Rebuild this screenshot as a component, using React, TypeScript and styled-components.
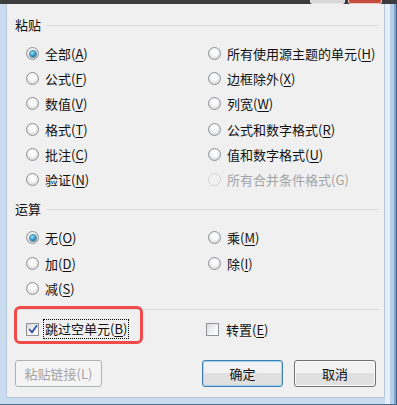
import React from "react";
import styled, { createGlobalStyle, css } from "styled-components";

const Global = createGlobalStyle`
  html, body { margin: 0; padding: 0; background: #3c3c3c; }
  body { font-family: "Noto Sans CJK SC", "Noto Sans", sans-serif; }
`;

const Window = styled.div`
  width: 397px;
  height: 405px;
  display: flex;
  flex-direction: column;
  background: #3c3c3c;
  overflow: hidden;
`;

const TitleStrip = styled.div`
  height: 4px;
  flex: none;
  display: flex;
  justify-content: flex-end;
  gap: 3px;
  padding-right: 15px;
`;

const CapButton = styled.div<{ $red?: boolean }>`
  width: ${(p) => (p.$red ? 32 : 33)}px;
  height: 3px;
  border: 1px solid ${(p) => (p.$red ? "#f1c6bf" : "#e8e8e8")};
  border-top: none;
  border-radius: 0 0 3px 3px;
  background: ${(p) => (p.$red ? "#c64b3c" : "#d8d8d8")};
`;

const Frame = styled.div`
  flex: 1;
  display: flex;
  padding: 0 0 0 6px;
  background: #c9dcef;
  border-bottom: 1px solid #4b6b8c;
`;

const RightEdge = styled.div`
  width: 12px;
  flex: none;
  background: linear-gradient(90deg, #e6eff8 0 5px, #b6d0ea 5px 9px, #7fa6cc 9px 11px, #3f5f80 11px);
`;

const PanelCol = styled.div`
  flex: 1;
  display: flex;
  flex-direction: column;
  padding-bottom: 6px;
`;

const Panel = styled.div`
  flex: 1;
  background: #f0f0f0;
  border-left: 1px solid #b4c6d8;
  border-right: 1px solid #b4c6d8;
  border-bottom: 1px solid #b4c6d8;
  padding: 12px 4px 0 8px;
  display: flex;
  flex-direction: column;
  color: #111;
  font-size: 13px;
`;

const GroupHeader = styled.div<{ $mt: number }>`
  display: flex;
  align-items: center;
  gap: 6px;
  height: 18px;
  line-height: 18px;
  margin-top: ${(p) => p.$mt}px;
  &::after {
    content: "";
    flex: 1;
    height: 1px;
    margin-right: 1px;
    background: #dcdcdc;
  }
`;

const OptionGrid = styled.div<{ $mt: number; $row: number; $rows: number }>`
  display: grid;
  grid-template-columns: 182px 1fr;
  grid-template-rows: repeat(${(p) => p.$rows}, ${(p) => p.$row}px);
  grid-auto-flow: column;
  margin-left: 11px;
  margin-top: ${(p) => p.$mt}px;
`;

const Option = styled.label<{ $disabled?: boolean }>`
  display: flex;
  align-items: center;
  gap: 6px;
  white-space: nowrap;
  color: ${(p) => (p.$disabled ? "#a3a3a3" : "#111")};
`;

const RadioDot = styled.span<{ $checked?: boolean; $disabled?: boolean }>`
  width: 11px;
  height: 11px;
  flex: none;
  border-radius: 50%;
  border: 1px solid ${(p) => (p.$disabled ? "#d2d2d2" : "#8f9397")};
  background: ${(p) =>
    p.$disabled
      ? "#f1f1f1"
      : "radial-gradient(circle at 50% 40%, #ffffff 0 30%, #e4e4e4 60%, #d2d2d2 100%)"};
  display: flex;
  align-items: center;
  justify-content: center;
  ${(p) =>
    p.$checked &&
    css`
      &::after {
        content: "";
        width: 6px;
        height: 6px;
        border-radius: 50%;
        background: radial-gradient(circle at 40% 35%, #7fd0ee 0 15%, #2a8bb6 55%, #17506e 100%);
        box-shadow: 0 0 0 1px #5b8fa8;
      }
    `}
`;

const Ul = styled.span`
  text-decoration: underline;
  text-underline-offset: 2px;
`;

const Separator = styled.div`
  height: 1px;
  background: #dcdcdc;
  margin: 8px 1px 0 0;
`;

const CheckRow = styled.div`
  display: grid;
  grid-template-columns: 180px 1fr;
  height: 22px;
  margin-top: 8px;
  margin-left: 11px;
`;

const CheckCell = styled.div`
  position: relative;
  display: flex;
  align-items: center;
`;

const Highlight = styled.div`
  position: absolute;
  left: -12px;
  top: -12px;
  width: 123px;
  height: 32px;
  border: 3px solid #ef4b4b;
  border-radius: 6px;
  pointer-events: none;
`;

const CheckLabel = styled.label<{ $gap: number }>`
  display: flex;
  align-items: center;
  gap: ${(p) => p.$gap}px;
  white-space: nowrap;
`;

const Box = styled.span`
  width: 11px;
  height: 11px;
  flex: none;
  border: 1px solid #8f9397;
  background: linear-gradient(135deg, #dcdcdc, #f8f8f8 70%, #ffffff);
  display: flex;
  align-items: center;
  justify-content: center;
`;

const Focus = styled.span`
  outline: 1px dotted #000;
  outline-offset: 0px;
  padding: 0 1px;
  line-height: 18px;
`;

const ButtonRow = styled.div`
  display: flex;
  gap: 11px;
  margin-top: 20px;
  padding-right: 4px;
`;

const Btn = styled.button<{ $variant?: "default" | "primary" | "disabled"; $w: number }>`
  width: ${(p) => p.$w}px;
  height: 27px;
  border-radius: 3px;
  font-family: inherit;
  font-size: 13px;
  padding: 0;
  ${(p) =>
    p.$variant === "primary"
      ? css`
          border: 1px solid #3c7fb1;
          box-shadow: inset 0 0 0 1px #9fd5f0;
          background: linear-gradient(#f2f2f2 0 50%, #e0e0e0 50% 100%);
          color: #111;
        `
      : p.$variant === "disabled"
      ? css`
          border: 1px solid #adb2b5;
          background: #f4f4f4;
          color: #a3a3a3;
        `
      : css`
          border: 1px solid #707070;
          box-shadow: inset 0 0 0 1px #fbfbfb;
          background: linear-gradient(#f2f2f2 0 50%, #e0e0e0 50% 100%);
          color: #111;
        `}
`;

const Spacer = styled.div`
  flex: 1;
`;

type Opt = { text: string; key: string; checked?: boolean; disabled?: boolean };

const paste: Opt[] = [
  { text: "全部", key: "A", checked: true },
  { text: "公式", key: "F" },
  { text: "数值", key: "V" },
  { text: "格式", key: "T" },
  { text: "批注", key: "C" },
  { text: "验证", key: "N" },
  { text: "所有使用源主题的单元", key: "H" },
  { text: "边框除外", key: "X" },
  { text: "列宽", key: "W" },
  { text: "公式和数字格式", key: "R" },
  { text: "值和数字格式", key: "U" },
  { text: "所有合并条件格式", key: "G", disabled: true },
];

const ops: (Opt | null)[] = [
  { text: "无", key: "O", checked: true },
  { text: "加", key: "D" },
  { text: "减", key: "S" },
  { text: "乘", key: "M" },
  { text: "除", key: "I" },
  null,
];

function Radio({ o }: { o: Opt }) {
  return (
    <Option $disabled={o.disabled}>
      <RadioDot $checked={o.checked} $disabled={o.disabled} />
      <span>
        {o.text}({o.disabled ? o.key : <Ul>{o.key}</Ul>})
      </span>
    </Option>
  );
}

function Check({ checked }: { checked?: boolean }) {
  return (
    <Box>
      {checked && (
        <svg width="10" height="10" viewBox="0 0 10 10">
          <path d="M1.2 5 L4 8.3 L9 1.2" fill="none" stroke="#2b4c9e" strokeWidth="1.7" />
        </svg>
      )}
    </Box>
  );
}

export default function App() {
  return (
    <Window>
      <Global />
      <TitleStrip>
        <CapButton />
        <CapButton $red />
      </TitleStrip>
      <Frame>
        <PanelCol>
          <Panel>
            <GroupHeader $mt={0}>粘贴</GroupHeader>
            <OptionGrid $mt={7} $row={25.2} $rows={6}>
              {paste.map((o) => (
                <Radio key={o.key} o={o} />
              ))}
            </OptionGrid>
            <GroupHeader $mt={8}>运算</GroupHeader>
            <OptionGrid $mt={7} $row={25.3} $rows={3}>
              {ops.map((o, i) => (o ? <Radio key={o.key} o={o} /> : <span key={i} />))}
            </OptionGrid>
            <Separator />
            <CheckRow>
              <CheckCell>
                <CheckLabel $gap={5}>
                  <Check checked />
                  <Focus>
                    跳过空单元(<Ul>B</Ul>)
                  </Focus>
                </CheckLabel>
                <Highlight />
              </CheckCell>
              <CheckCell>
                <CheckLabel $gap={7}>
                  <Check />
                  <span>
                    转置(<Ul>E</Ul>)
                  </span>
                </CheckLabel>
              </CheckCell>
            </CheckRow>
            <ButtonRow>
              <Btn $variant="disabled" $w={87}>粘贴链接(L)</Btn>
              <Spacer />
              <Btn $variant="primary" $w={81}>确定</Btn>
              <Btn $w={82}>取消</Btn>
            </ButtonRow>
          </Panel>
        </PanelCol>
        <RightEdge />
      </Frame>
    </Window>
  );
}
